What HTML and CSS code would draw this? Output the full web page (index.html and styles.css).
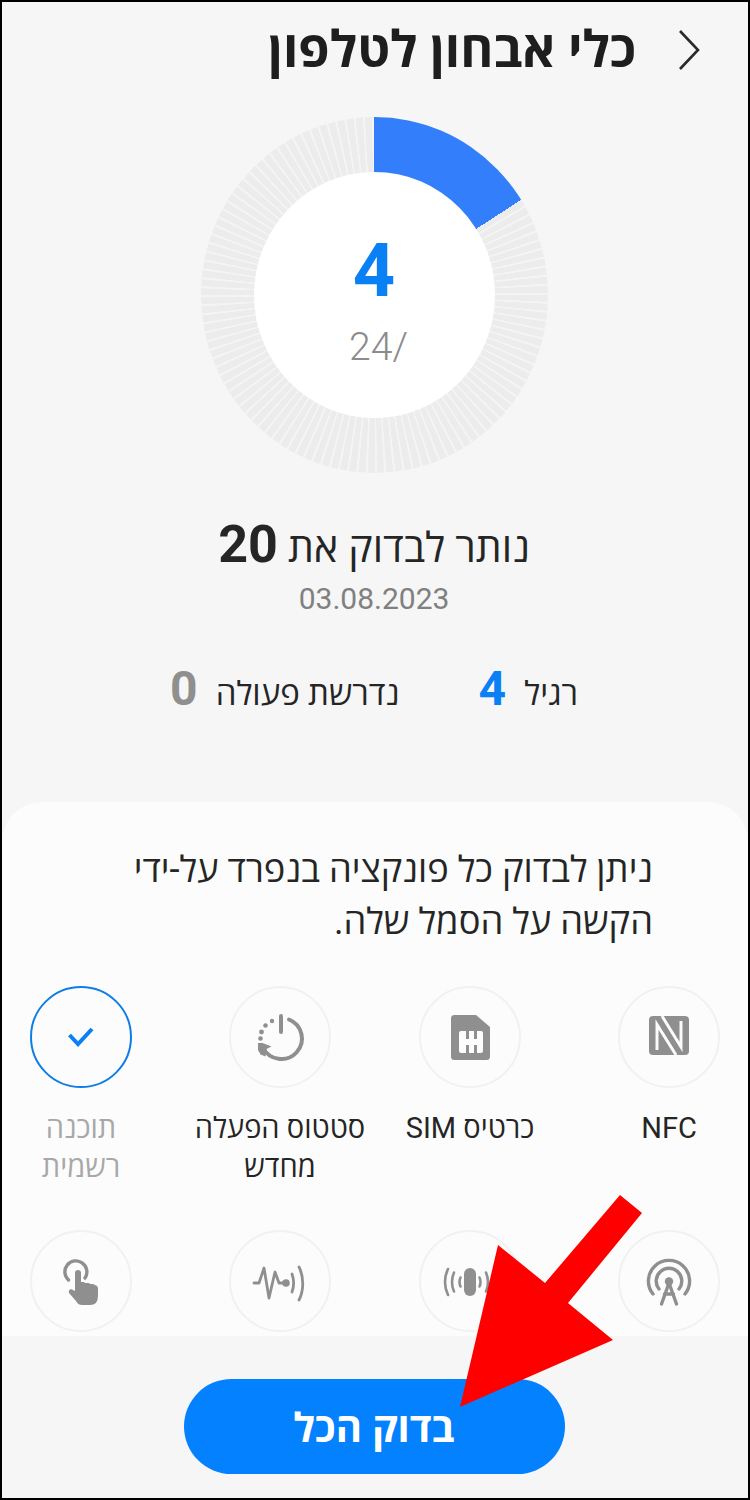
FILE: index.html
```html
<!DOCTYPE html>
<html lang="he" dir="rtl">
<head>
<meta charset="utf-8">
<title>כלי אבחון לטלפון</title>
<link rel="stylesheet" href="styles.css">
</head>
<body>
<div class="app">
  <header class="header">
    <svg class="back" viewBox="0 0 24 42" aria-hidden="true"><path d="M3 2 L21 21 L3 40"/></svg>
    <h1 class="title">כלי אבחון לטלפון</h1>
  </header>

  <section class="overview">
    <div class="ring">
      <div class="ring-hole">
        <span class="ring-value">4</span>
        <span class="ring-total">/24</span>
      </div>
    </div>
    <p class="remaining">נותר לבדוק את <b>20</b></p>
    <p class="date">03.08.2023</p>
    <div class="stats">
      <span class="stat">רגיל <b class="num-blue">4</b></span>
      <span class="stat">נדרשת פעולה <b class="num-gray">0</b></span>
    </div>
  </section>

  <section class="sheet">
    <p class="hint">ניתן לבדוק כל פונקציה בנפרד על-ידי הקשה על הסמל שלה.</p>
    <div class="grid">
      <div class="item">
        <span class="dot"><svg class="icon" viewBox="0 0 48 48"><rect x="4" y="3" width="40" height="39" rx="4" fill="#8f8f8f"/><path d="M12 37V11.500L31 42M36 8v26L17 3" fill="none" stroke="#fcfcfc" stroke-width="3"/><path d="M17 15l13 20M31 31L18 11" fill="none" stroke="#8f8f8f" stroke-width="1"/></svg></span>
        <span class="label">NFC</span>
      </div>
      <div class="item">
        <span class="dot"><svg class="icon" viewBox="0 0 48 48"><path d="M8.500 2H30l14 12v29.500a3.500 3.500 0 0 1-3.500 3.500h-32A3.500 3.500 0 0 1 5 43.500V5.500A3.500 3.500 0 0 1 8.500 2z" fill="#8f8f8f"/><rect x="13" y="18" width="24" height="22" rx="2" fill="#fcfcfc"/><g fill="#8f8f8f"><rect x="20" y="18" width="3" height="8"/><rect x="28" y="18" width="3" height="8"/><rect x="20" y="32" width="3" height="8"/><rect x="28" y="32" width="3" height="8"/></g></svg></span>
        <span class="label">כרטיס SIM</span>
      </div>
      <div class="item">
        <span class="dot"><svg class="icon" viewBox="0 0 48 48"><g fill="none" stroke="#8f8f8f" stroke-width="4" stroke-linecap="round"><path d="M25 3v16"/><path d="M33 6.500a20.500 20.500 0 1 1-26 28"/></g><g fill="#8f8f8f"><circle cx="16" cy="8" r="2.200"/><circle cx="9.500" cy="12.500" r="2.300"/><circle cx="5.500" cy="19" r="2.400"/><circle cx="4.500" cy="25.500" r="2.300"/><path d="M2 30h4.500l9 3.500-5 2.500-1 7.500-5-2L2 37z"/></g></svg></span>
        <span class="label">סטטוס הפעלה<br>מחדש</span>
      </div>
      <div class="item">
        <span class="dot dot-done"><svg class="check" viewBox="0 0 28 22"><path d="M2.500 9 L11 18 L25 3"/></svg></span>
        <span class="label label-muted">תוכנה<br>רשמית</span>
      </div>
      <div class="item">
        <span class="dot"><svg class="icon" viewBox="0 0 48 48"><g fill="none" stroke="#8f8f8f" stroke-width="3.400" stroke-linecap="round"><path d="M8 37A20.600 20.600 0 1 1 40 37"/><path d="M14 32A12.800 12.800 0 1 1 34 32"/><path d="M24 26l-7.500 21M24 26l7.500 21M19.500 37h9"/></g><circle cx="24" cy="24.500" r="4.200" fill="#8f8f8f"/></svg></span>
      </div>
      <div class="item">
        <span class="dot"><svg class="icon" viewBox="0 0 48 48"><g fill="none" stroke="#8f8f8f" stroke-width="2.600" stroke-linecap="round"><path d="M2 12c-2 4-3 8-3 13s1 9 3 13"/><path d="M8 15.500c-1.300 3-2 6-2 9.500s.7 6.500 2 9.500"/><path d="M14.500 20.500c-.7 1.400-1 3-1 4.500s.3 3.100 1 4.500"/><path d="M33.500 20.500c.7 1.400 1 3 1 4.500s-.3 3.100-1 4.500"/><path d="M40 15.500c1.300 3 2 6 2 9.500s-.7 6.500-2 9.500"/></g><rect x="18" y="11" width="12" height="28" rx="6" fill="#8f8f8f"/></svg></span>
      </div>
      <div class="item">
        <span class="dot"><svg class="icon" viewBox="0 0 48 48"><g fill="none" stroke="#8f8f8f" stroke-width="2.800" stroke-linecap="round" stroke-linejoin="round"><path d="M-2 26h5l5-15 5 30 6-26 4 11h7"/><path d="M36 17c2 5.500 2 12.500 0 18"/><path d="M43 10c5 9.500 5 23.500 0 33"/></g><circle cx="30" cy="26" r="3.800" fill="#8f8f8f"/></svg></span>
      </div>
      <div class="item">
        <span class="dot"><svg class="icon" viewBox="0 0 48 48"><path d="M11.500 23A11 11 0 1 1 28 21" fill="none" stroke="#8f8f8f" stroke-width="3.400" stroke-linecap="round"/><path d="M18 16a3 3 0 0 1 6 0v9h3l1 1h4l1 1h3l4 2q1 1 1 3v7q0 9-8 9h-8q-4 0-6-4l-7-8q-1-3 2-4l4 2z" fill="#8f8f8f"/></svg></span>
      </div>
    </div>
  </section>

  <footer class="footer">
    <button class="cta" type="button">בדוק הכל</button>
  </footer>

  <svg class="arrow" viewBox="0 0 750 1500" aria-hidden="true"><polygon points="620,1195 642,1213 568,1303 613,1340 460,1407 498,1245 545,1283"/></svg>
</div>
</body>
</html>
```
FILE: styles.css
```css
* { box-sizing: border-box; }
html, body { margin: 0; padding: 0; }
body {
  width: 750px;
  height: 1500px;
  overflow: hidden;
  font-family: Roboto, "Open Sans", "Liberation Sans", sans-serif;
  color: #252525;
}
p, h1 { margin: 0; }

.app {
  position: relative;
  width: 750px;
  height: 1500px;
  border: 2px solid #000;
  background: #f6f6f6;
  display: flex;
  flex-direction: column;
  overflow: hidden;
}

.header {
  height: 95px;
  flex: none;
  display: flex;
  align-items: center;
  gap: 41px;
  padding-inline-start: 47px;
}
.back { width: 24px; height: 42px; flex: none; }
.back path { fill: none; stroke: #2a2a2a; stroke-width: 2.600; }
.title {
  font-size: 50.500px;
  font-weight: 700;
  line-height: 60px;
  color: #1e1e1e;
}

.overview {
  flex: none;
  height: 705px;
  display: flex;
  flex-direction: column;
  align-items: center;
  padding-top: 20px;
  padding-inline-start: 2px;
}
.ring {
  width: 347px;
  height: 356px;
  flex: none;
  border-radius: 50%;
  background:
    conic-gradient(#337ffb 0 57deg, transparent 57deg),
    repeating-conic-gradient(#ececec 0 2.100deg, #f4f4f4 2.300deg 2.800deg, #ececec 3deg);
  display: flex;
  align-items: center;
  justify-content: center;
}
.ring-hole {
  width: 241px;
  height: 246px;
  border-radius: 50%;
  background: #fff;
  display: flex;
  flex-direction: column;
  align-items: center;
}
.ring-value {
  margin-top: 54px;
  font-size: 74px;
  font-weight: 700;
  line-height: 90px;
  color: #0a80f5;
}
.ring-total {
  margin-top: 8px;
  margin-inline-end: 9px;
  font-size: 39px;
  font-weight: 300;
  line-height: 46px;
  color: #8c8c8c;
}

.remaining {
  margin-top: 45px;
  font-size: 41px;
  line-height: 60px;
  height: 60px;
}
.remaining b {
  font-size: 52px;
  font-weight: 700;
  line-height: 40px;
}
.date {
  margin-top: 2px;
  font-size: 30px;
  line-height: 38px;
  height: 38px;
  color: #808080;
}
.stats {
  margin-top: 46px;
  height: 60px;
  display: flex;
  gap: 79px;
}
.stat {
  font-size: 33px;
  line-height: 60px;
  height: 60px;
}
.stat b {
  font-size: 48px;
  font-weight: 700;
  line-height: 40px;
  margin-inline-start: 10px;
}
.num-blue { color: #0a80f5; }
.num-gray { color: #8f8f8f; }

.sheet {
  flex: 1;
  min-height: 0;
  overflow: hidden;
  background: #fcfcfc;
  border-radius: 40px 40px 0 0;
  padding-top: 42px;
}
.hint {
  padding-inline: 95px 92px;
  font-size: 36.300px;
  line-height: 52px;
  color: #252525;
}
.grid {
  margin-top: 38px;
  padding-inline-start: 1px;
  display: grid;
  grid-template-columns: 156px 138px 138px 156px;
  column-gap: 52px;
  row-gap: 43px;
  grid-auto-rows: 201px;
}
.item {
  display: flex;
  flex-direction: column;
  align-items: center;
}
.dot {
  width: 102px;
  height: 102px;
  flex: none;
  border-radius: 50%;
  border: 2px solid #f1f1f1;
  display: flex;
  align-items: center;
  justify-content: center;
}
.dot-done { border-color: #0f7de8; }
.icon { width: 48px; height: 48px; overflow: visible; }
.check { width: 28px; height: 22px; }
.check path { fill: none; stroke: #0a80f5; stroke-width: 4; }
.label {
  margin-top: 21px;
  font-size: 29px;
  line-height: 39px;
  text-align: center;
  white-space: nowrap;
  color: #252525;
}
.label-muted { color: #a8a8a8; }

.footer {
  flex: none;
  height: 162px;
  padding-top: 43px;
  padding-inline-start: 2px;
  display: flex;
  justify-content: center;
}
.cta {
  width: 381px;
  height: 95px;
  border: 0;
  border-radius: 48px;
  background: #0381fe;
  color: #fff;
  font-family: inherit;
  font-size: 40px;
  font-weight: 700;
}

.arrow {
  position: absolute;
  left: -2px;
  top: -2px;
  width: 750px;
  height: 1500px;
  pointer-events: none;
}
.arrow polygon { fill: #ff0000; }
```
